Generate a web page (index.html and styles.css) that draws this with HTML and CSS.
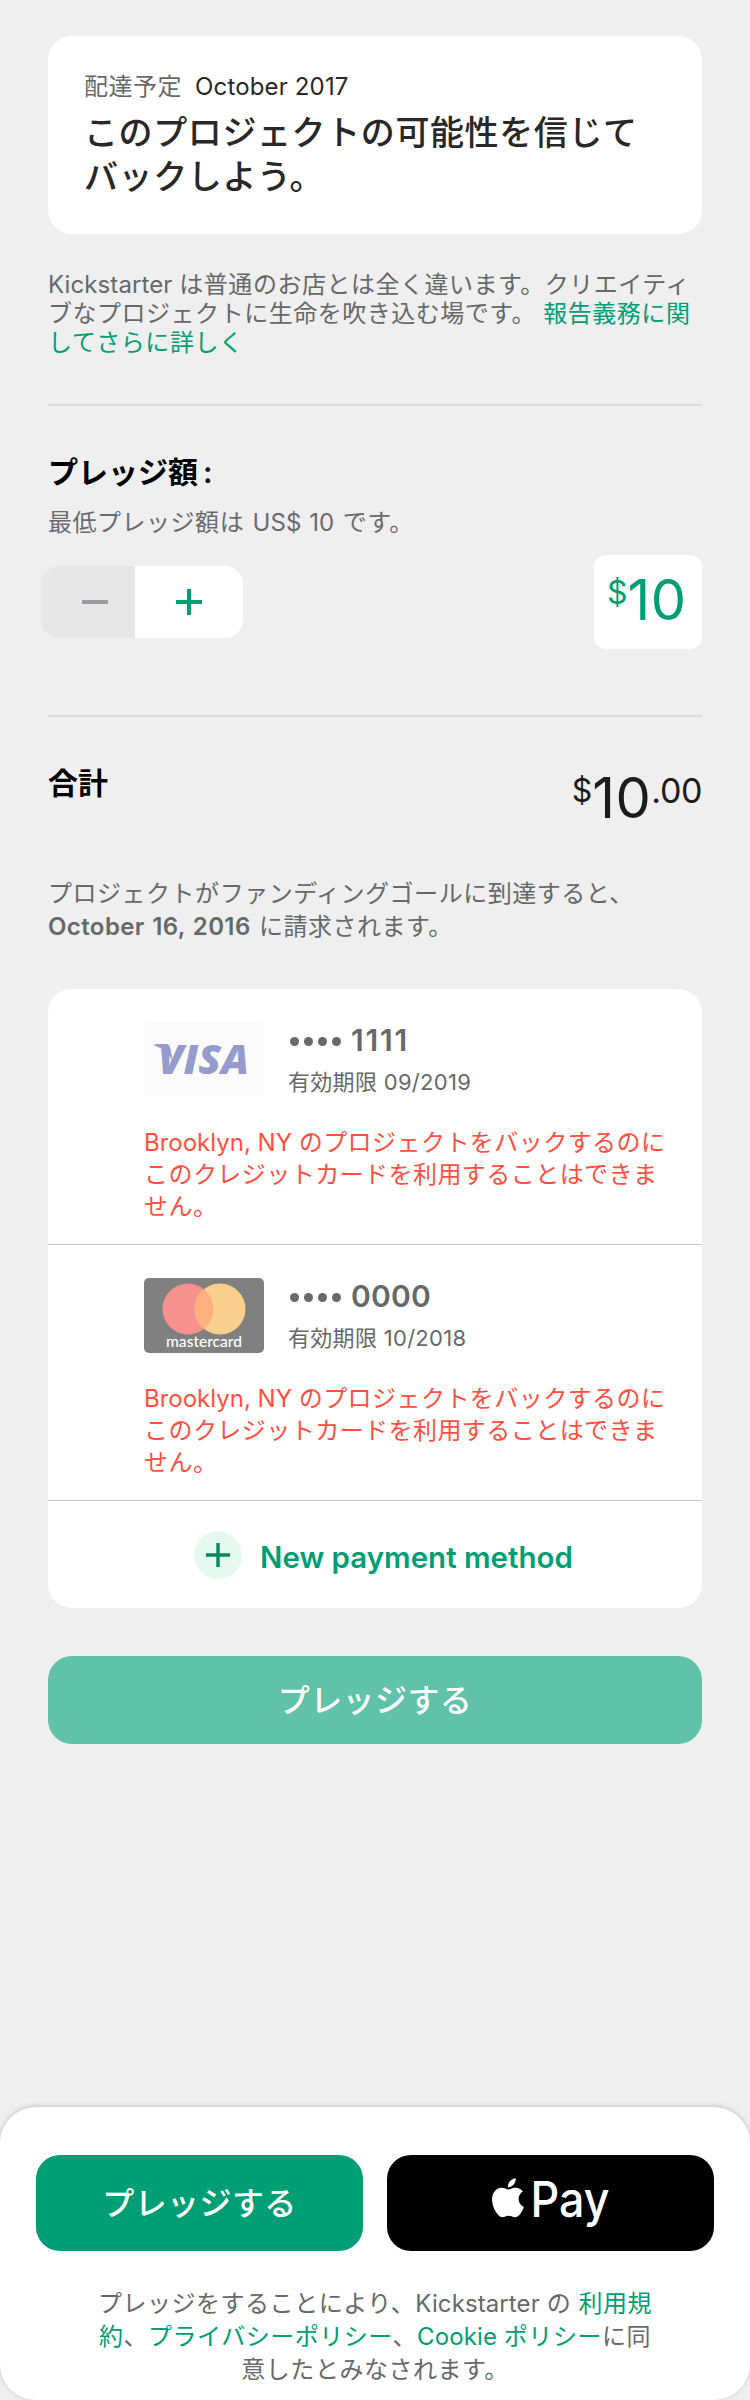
FILE: index.html
```html
<!DOCTYPE html>
<html lang="ja">
<head>
<meta charset="utf-8">
<title>プレッジ</title>
<link rel="stylesheet" href="styles.css">
</head>
<body>
<main class="page">
  <section class="reward">
    <p class="reward-date">配達予定<span class="date">October 2017</span></p>
    <h1 class="reward-title">このプロジェクトの可能性を信じて<br>バックしよう。</h1>
  </section>
  <p class="notice"><span class="lat">Kickstarter </span>は普通のお店とは全く違います。クリエイティ<br>ブなプロジェクトに生命を吹き込む場です。 <a class="link">報告義務に関<br>してさらに詳しく</a></p>

  <section class="amount">
    <h2 class="heading">プレッジ額<span class="colon">:</span></h2>
    <p class="minimum">最低プレッジ額は <span class="lat">US$ 10</span> です。</p>
    <div class="amount-row">
      <div class="stepper">
        <button class="step step-minus" aria-label="減らす"><svg width="26" height="26" viewBox="0 0 26 26"><path d="M0 13H26"/></svg></button>
        <button class="step step-plus" aria-label="増やす"><svg width="26" height="26" viewBox="0 0 26 26"><path d="M0 13H26M13 0V26"/></svg></button>
      </div>
      <div class="amount-box"><span class="cur">$</span><span class="num">10</span></div>
    </div>
  </section>

  <section class="total">
    <h2 class="heading">合計</h2>
    <div class="price"><span class="cur">$</span><span class="num">10</span><span class="cents">.00</span></div>
  </section>
  <p class="charge">プロジェクトがファンディングゴールに到達すると、<br><b class="charge-date">October 16, 2016</b> に請求されます。</p>

  <section class="methods">
    <article class="card">
      <div class="card-top">
        <svg class="logo" width="120" height="74" viewBox="0 0 120 74">
          <rect width="120" height="74" rx="5" fill="#fbfbfb"/>
          <path d="M10 23.5Q10 22 12 22H22Q25 22 26 25L29 40Q23 27 10 23.5Z" fill="#959bcc"/>
          <text class="visa" x="14" y="51.5" textLength="91" lengthAdjust="spacingAndGlyphs">VISA</text>
        </svg>
        <div class="card-info">
          <p class="digits digits-narrow"><span class="dots"><i></i><i></i><i></i><i></i></span>1111</p>
          <p class="expiry">有効期限 <span>09/2019</span></p>
        </div>
      </div>
      <p class="error"><span class="lat">Brooklyn, NY </span>のプロジェクトをバックするのに<br>このクレジットカードを利用することはできま<br>せん。</p>
    </article>
    <article class="card">
      <div class="card-top">
        <svg class="logo" width="120" height="75" viewBox="0 0 120 75">
          <rect width="120" height="75" rx="5" fill="#808080"/>
          <circle cx="44" cy="31" r="25.5" fill="#f6918e"/>
          <circle cx="76" cy="31" r="25.5" fill="#fbd08f"/>
          <path d="M60 11.2A25.5 25.5 0 0 1 60 50.8A25.5 25.5 0 0 1 60 11.2Z" fill="#ffae80"/>
          <text class="mc" x="22" y="69" textLength="76" lengthAdjust="spacingAndGlyphs">mastercard</text>
        </svg>
        <div class="card-info">
          <p class="digits"><span class="dots"><i></i><i></i><i></i><i></i></span>0000</p>
          <p class="expiry">有効期限 <span>10/2018</span></p>
        </div>
      </div>
      <p class="error"><span class="lat">Brooklyn, NY </span>のプロジェクトをバックするのに<br>このクレジットカードを利用することはできま<br>せん。</p>
    </article>
    <a class="new-method">
      <svg width="48" height="48" viewBox="0 0 48 48"><circle cx="24" cy="24" r="24" fill="#e6f9f1"/><path d="M12 24H36M24 12V36" stroke="#038860" stroke-width="3.4"/></svg>
      <span>New payment method</span>
    </a>
  </section>
  <button class="btn btn-disabled">プレッジする</button>
</main>

<footer class="sheet">
  <div class="sheet-buttons">
    <button class="btn btn-pledge">プレッジする</button>
    <button class="btn btn-apple" aria-label="Apple Pay">
      <svg width="134" height="80" viewBox="-8 -14 134 80">
        <path transform="translate(-3.6 1.2) scale(1.63)" fill="#fff" d="M12.152 6.896c-.948 0-2.415-1.078-3.96-1.04-2.04.027-3.91 1.183-4.961 3.014-2.117 3.675-.546 9.103 1.519 12.09 1.013 1.454 2.208 3.09 3.792 3.039 1.52-.065 2.09-.987 3.935-.987 1.831 0 2.35.987 3.96.948 1.637-.026 2.676-1.48 3.676-2.948 1.156-1.688 1.636-3.325 1.662-3.415-.039-.013-3.182-1.221-3.22-4.857-.026-3.04 2.48-4.494 2.597-4.559-1.429-2.09-3.623-2.324-4.39-2.376-2-.156-3.675 1.09-4.61 1.09zM15.53 3.83c.843-1.012 1.4-2.427 1.245-3.83-1.207.052-2.662.805-3.532 1.818-.78.896-1.454 2.338-1.273 3.714 1.338.104 2.715-.688 3.559-1.701"/>
        <text class="pay" x="38.5" y="40.4" textLength="79" lengthAdjust="spacingAndGlyphs">Pay</text>
      </svg>
    </button>
  </div>
  <p class="terms">プレッジをすることにより、<span class="lat">Kickstarter </span>の <a class="link">利用規<br>約</a>、<a class="link">プライバシーポリシー</a>、<a class="link"><span class="lat">Cookie </span>ポリシー</a>に同<br>意したとみなされます。</p>
</footer>
</body>
</html>
```

FILE: styles.css
```css
* { box-sizing: border-box; }
body {
  margin: 0;
  background: #efefef;
  font-family: Inter, "Noto Sans CJK JP", sans-serif;
  font-size: 24px;
  letter-spacing: .52px;
  color: #656969;
  height: 2400px;
  display: flex;
  flex-direction: column;
  justify-content: space-between;
}
p, h1, h2 { margin: 0; white-space: nowrap; }
button { border: 0; padding: 0; font: inherit; }
.lat { letter-spacing: .1px; }
.link { color: #009e74; }
.page { padding: 36px 48px 0; }

.reward { background: #fff; border-radius: 24px; padding: 35px 36px; height: 198px; }
.reward-date { line-height: 32px; }
.date { margin-left: 13px; color: #282828; letter-spacing: .15px; }
.reward-title { margin-top: 8px; font-size: 34px; line-height: 44px; letter-spacing: .6px; font-weight: 500; color: #282828; }
.notice { margin-top: 36px; line-height: 29px; }

.amount { margin-top: 47px; border-top: 2px solid #dcdedd; padding-top: 46px; }
.heading { font-size: 30px; line-height: 40px; font-weight: 600; color: #000; letter-spacing: 0; }
.colon { margin-left: 5px; }
.minimum { margin-top: 15px; line-height: 32px; color: #696a70; word-spacing: 1px; }
.amount-row { display: flex; justify-content: space-between; align-items: center; margin: 16px 0 66px -7px; }
.stepper { display: flex; width: 202px; height: 72px; border-radius: 18px; overflow: hidden; }
.step { display: flex; align-items: center; }
.step path { fill: none; stroke-width: 4; }
.step-minus { width: 94px; background: #e7e7e7; padding-left: 41px; }
.step-minus path { stroke: #9b9e9e; }
.step-plus { width: 108px; background: #fff; padding-left: 41px; }
.step-plus path { stroke: #009e74; }
.amount-box { display: flex; width: 108px; height: 94px; padding: 15px 0 0 13px; background: #fff; border-radius: 12px; color: #009e74; }
.cur, .cents { font-size: 34px; line-height: 46px; letter-spacing: -.4px; }
.cur { font-size: 32px; letter-spacing: 0; }
.num { font-size: 56px; line-height: 60px; letter-spacing: .5px; }

.total { display: flex; justify-content: space-between; border-top: 2px solid #dcdedd; padding-top: 46px; }
.price { display: flex; margin-top: 5px; color: #1c1c1c; }
.charge { margin-top: 49px; line-height: 33px; word-spacing: 1px; }
.charge-date { font-weight: 600; letter-spacing: .4px; }

.methods { margin-top: 46px; background: #fff; border-radius: 24px; height: 619px; }
.card { height: 256px; border-bottom: 1px solid #c4c6c6; padding: 33px 0 0 96px; }
.card-top { display: flex; gap: 24px; height: 75px; }
.digits { display: flex; align-items: center; font-size: 30px; line-height: 36px; font-weight: 600; letter-spacing: .2px; }
.digits-narrow { letter-spacing: 1.8px; }
.dots { display: flex; gap: 5px; margin: 2px 10px 0 2px; }
.dots i { width: 9px; height: 9px; border-radius: 50%; background: #656969; }
.expiry { margin-top: 8px; font-size: 22px; line-height: 32px; letter-spacing: .3px; }
.error { margin-top: 30px; line-height: 32px; color: #ff4f3e; letter-spacing: .45px; }
.error .lat { letter-spacing: 0; }
.visa { font: italic 800 41px "Open Sans", sans-serif; fill: #959bcc; letter-spacing: 0; }
.mc { font: 500 15px Lato, sans-serif; fill: #fff; letter-spacing: 0; }
.new-method { display: flex; align-items: flex-start; gap: 18px; padding: 30px 0 0 146px; font-size: 29.5px; font-weight: 600; letter-spacing: 0; color: #009e74; line-height: 48px; white-space: nowrap; }
.new-method span { padding-top: 2px; }
.btn { display: flex; align-items: center; justify-content: center; border-radius: 24px; font-size: 32px; letter-spacing: .4px; color: #fff; font-weight: 500; padding-bottom: 5px; }
.btn-disabled { width: 654px; height: 88px; margin-top: 48px; background: #5fc2a9; }

.sheet { height: 293px; padding: 48px 36px 0; background: #fff; border-radius: 36px; box-shadow: 0 -1px 5px rgba(0,0,0,.18); }
.sheet-buttons { display: flex; gap: 24px; }
.sheet .btn { flex: 1; height: 96px; }
.btn-pledge { background: #009e74; }
.sheet .btn-apple { background: #000; padding: 0; }
.pay { font: 500 49px Inter, sans-serif; fill: #fff; letter-spacing: 0; }
.terms { margin-top: 36px; line-height: 33px; text-align: center; }
```
